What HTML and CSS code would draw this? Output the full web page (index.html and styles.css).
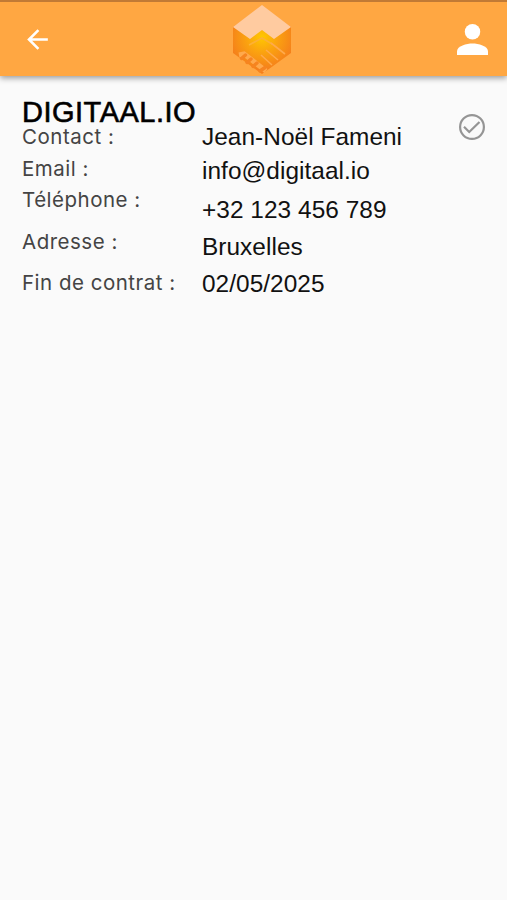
FILE: index.html
```html
<!DOCTYPE html>
<html lang="fr">

<head>
    <meta charset="UTF-8">
    <meta name="viewport" content="width=device-width, initial-scale=1.0">
    <title>DIGITAAL.IO</title>
    <link rel="stylesheet" href="styles.css">
</head>

<body>
    <header class="topbar">
        <svg class="back" viewBox="0 0 24 24">
            <path d="M20 11H7.83l5.59-5.59L12 4l-8 8 8 8 1.41-1.41L7.83 13H20v-2z" />
        </svg>
        <svg class="logo" viewBox="0 0 60 70">
            <defs>
                <radialGradient id="glow" cx="30" cy="32" r="33" gradientUnits="userSpaceOnUse">
                    <stop offset="0" stop-color="#ffc800" />
                    <stop offset="0.45" stop-color="#fba40f" />
                    <stop offset="1" stop-color="#f57f1b" />
                </radialGradient>
            </defs>
            <path fill="url(#glow)" d="M1 22L30 1l29 21v26L30 69 1 48z" />
            <path fill="#ffcba0" d="M30 0l29 22-17 12-12-9-12 9L1 22z" />
            <!-- clasped hands -->
            <path class="palm" d="M17 40l13-7 10 6" />
            <path class="gap" d="M39 38l14 11M34 45l12 10M29 50l11 10" />
            <path class="gap wide" d="M7 50l5-1 22 17" />
            <path class="finger" d="M9.500 53.500l4-3.500M15 57.500l4-3.500M21 61.500l4-3.500M28 66l5-3.500" />
        </svg>
        <svg class="user" viewBox="0 0 32 32">
            <circle cx="16" cy="8" r="8" />
            <path d="M0 32v-4c0-5.500 10-8 16-8s16 2.500 16 8v4z" />
        </svg>
    </header>

    <main class="contract">
        <div class="infos">
            <h1>DIGITAAL.IO</h1>
            <div class="columns">
                <ul class="labels">
                    <li class="contact">Contact :</li>
                    <li class="email">Email :</li>
                    <li class="phone">Téléphone :</li>
                    <li class="address">Adresse :</li>
                    <li class="end">Fin de contrat :</li>
                </ul>
                <ul class="values">
                    <li class="name">Jean-Noël Fameni</li>
                    <li class="mail">info@digitaal.io</li>
                    <li>+32 123 456 789</li>
                    <li>Bruxelles</li>
                    <li>02/05/2025</li>
                </ul>
            </div>
        </div>
        <svg class="check" viewBox="0 0 26 26">
            <circle cx="13" cy="13" r="11.900" />
            <path d="M5 12.800l5.200 5.200L20.500 8" />
        </svg>
    </main>
</body>

</html>
```
FILE: styles.css
```css
body {
    margin: 0;
    min-height: 100vh;
    background-color: #fafafa;
    color: #111111;
    font-family: "Liberation Sans", Arial, sans-serif;
}

.topbar {
    display: flex;
    justify-content: space-between;
    align-items: flex-start;
    box-sizing: border-box;
    height: 76px;
    padding: 2px 19px 0 22px;
    border-top: 2px solid #c17a35;
    background-color: #ffa742;
    box-shadow: 0 2px 6px rgba(0, 0, 0, 0.4);
}

.back {
    width: 31px;
    height: 31px;
    margin-top: 20px;
    fill: #ffffff;
}

.logo {
    width: 60px;
    height: 70px;
    margin-top: 1px;
    margin-left: 13px;
}

.palm,
.gap,
.finger {
    fill: none;
    stroke: #fdb136;
    stroke-width: 1.6;
}

.gap {
    stroke: #ffa94c;
}

.wide {
    stroke-width: 5;
}

.finger {
    stroke: #f68420;
    stroke-width: 3.4;
    stroke-linecap: round;
}

.user {
    width: 31px;
    height: 31px;
    margin-top: 20px;
    fill: #ffffff;
}

.contract {
    display: flex;
    justify-content: space-between;
    padding: 20px 22px 0;
}

h1 {
    margin: 0;
    height: 25px;
    font-size: 29px;
    font-weight: normal;
    line-height: 32px;
    letter-spacing: 0.5px;
    color: #000000;
    -webkit-text-stroke: 0.6px #000000;
}

.columns {
    display: flex;
}

ul {
    margin: 0;
    padding: 0;
    list-style: none;
    white-space: nowrap;
}

.labels {
    width: 180px;
    font-family: Inter, sans-serif;
    font-size: 20.5px;
    font-weight: 400;
    line-height: 32px;
    letter-spacing: 0.5px;
    color: #444444;
}

.phone {
    margin-top: -1px;
}

.address {
    margin-top: 10px;
}

.end {
    margin-top: 9px;
}

.values {
    margin-top: -2px;
    font-size: 24.4px;
    line-height: 37px;
    letter-spacing: 0.05px;
}

.name {
    line-height: 36px;
}

.mail {
    margin-bottom: 5px;
    line-height: 31px;
}

.check {
    width: 26px;
    height: 26px;
    margin-top: 18px;
    fill: none;
    stroke: #959595;
    stroke-width: 2.2;
}
```
